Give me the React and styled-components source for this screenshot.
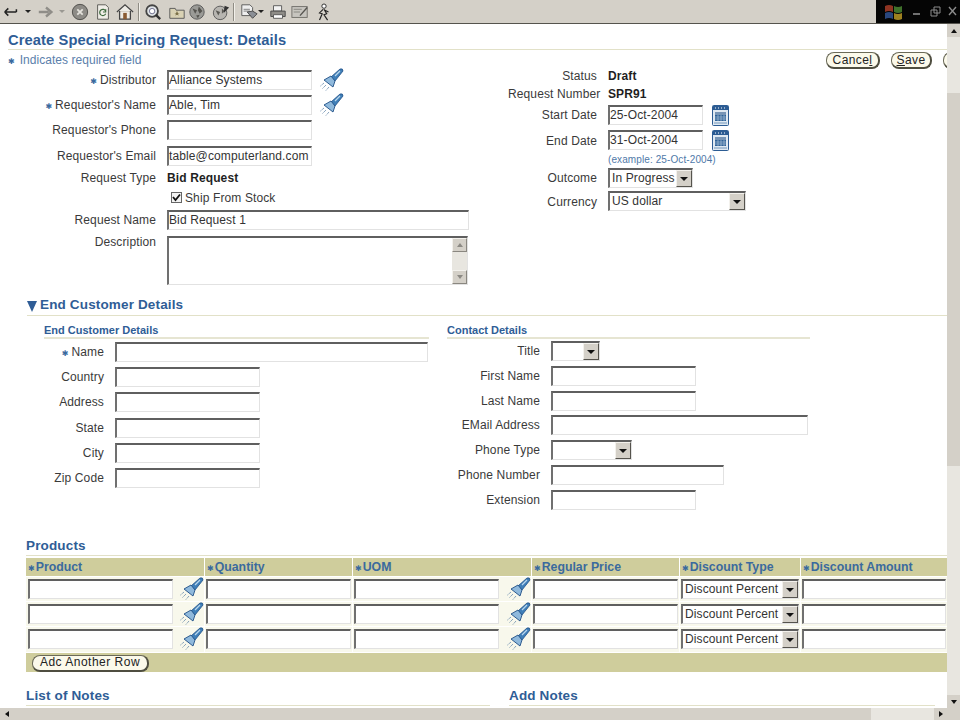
import React from "react";
import styled, { createGlobalStyle } from "styled-components";

const Global = createGlobalStyle`
  html, body { margin: 0; padding: 0; background: #fff; }
  body { width: 960px; height: 720px; overflow: hidden; font-family: "Liberation Sans", Arial, sans-serif; }
  * { box-sizing: border-box; }
`;
const Screen = styled.div`width:960px;height:720px;display:flex;flex-direction:column;overflow:hidden;background:#fff;font-size:12px;color:#3a3a3a;letter-spacing:.12px;`;
const Toolbar = styled.div`height:24px;flex:none;background:#d4d0c8;border-bottom:1px solid #55534d;display:flex;align-items:center;justify-content:space-between;`;
const ToolIcons = styled.div`display:flex;align-items:center;padding-left:2px;`;
const ToolSlot = styled.span`display:flex;align-items:center;justify-content:center;width:18px;height:22px;margin-left:${p=>p.$ml||0}px;`;
const CaretSlot = styled.span`display:flex;align-items:center;justify-content:center;width:8px;height:22px;margin-left:${p=>p.$ml||0}px;&::after{content:"";border:3px solid transparent;border-top:3px solid ${p=>p.$dim?"#9a9892":"#222"};border-bottom:0;}`;
const Divider = styled.span`width:2px;height:18px;background:#8f8c84;border-right:1px solid #f2f0ea;margin-left:${p=>p.$ml}px;`;
const WinBox = styled.div`width:84px;height:23px;background:#050505;display:flex;align-items:center;padding-left:8px;gap:7px;`;
const Middle = styled.div`flex:1;min-height:0;display:flex;`;
const Page = styled.main`width:947px;flex:none;overflow:hidden;padding-top:7px;`;
const Title = styled.h1`margin:0 0 0 8px;font-size:14.7px;line-height:18px;font-weight:700;color:#2f5d96;letter-spacing:.1px;`;
const Rule = styled.div`height:1px;background:#e2e1c8;margin:${p=>p.$m||"0"};`;
const Top = styled.div`display:grid;grid-template-columns:480px 1fr;height:246px;`;
const LeftCol = styled.div`padding-left:8px;`;
const Required = styled.div`color:#5b80ab;height:20px;line-height:20px;letter-spacing:.04px;`;
const Star = styled.span`color:#3a6a9e;font-family:"DejaVu Sans",sans-serif;font-size:${p=>p.$s||8}px;margin-right:${p=>p.$m||3}px;letter-spacing:0;`;
const FormGrid = styled.div`display:grid;grid-template-columns:${p=>p.$label}px auto;column-gap:${p=>p.$gap||10}px;justify-content:start;margin-top:${p=>p.$mt||0}px;`;
const Label = styled.div`height:${p=>p.$h||25}px;line-height:${p=>p.$lh||21}px;text-align:right;white-space:nowrap;`;
const Value = styled.div`height:${p=>p.$h||25}px;display:flex;align-items:flex-start;gap:8px;`;
const Strong = styled.span`font-weight:700;color:#1f1f1f;line-height:${p=>p.$lh||21}px;`;
const Input = styled.div`width:${p=>p.$w}px;height:${p=>p.$h||20}px;background:#fff;border-style:solid;border-width:2px 1px 1px 2px;border-color:#5f5f5f #e2e2e2 #e2e2e2 #707070;padding-left:0;line-height:17px;color:#333;white-space:nowrap;overflow:hidden;flex:none;`;
const Select = styled(Input)`display:flex;justify-content:space-between;padding:0 0 0 2px;`;
const SelectBtn = styled.span`width:16px;flex:none;background:#d4d0c8;border:1px solid;border-color:#f3f1ec #55534d #55534d #f3f1ec;display:flex;align-items:center;justify-content:center;`;
const Caret = styled.span`width:0;height:0;border:4px solid transparent;border-top:4px solid #111;border-bottom:0;`;
const CheckRow = styled.div`height:22px;display:flex;align-items:flex-start;gap:3px;padding:2px 0 0 4px;line-height:17px;`;
const Box = styled.span`width:11px;height:11px;margin-top:2px;border:1px solid #666;background:#f3f3f3;display:flex;align-items:center;justify-content:center;`;
const TextArea = styled(Input)`position:relative;`;
const AreaBar = styled.div`position:absolute;right:0;top:0;bottom:0;width:15px;background:#e8e6e0;display:flex;flex-direction:column;justify-content:space-between;`;
const AreaArrow = styled.span`height:14px;background:#d4d0c8;border:1px solid;border-color:#f3f1ec #8a8780 #8a8780 #f3f1ec;display:flex;align-items:center;justify-content:center;&::after{content:"";border:3px solid transparent;${p=>p.$up?"border-bottom:4px solid #8c8a84;border-top:0;":"border-top:4px solid #8c8a84;border-bottom:0;"}}`;
const Buttons = styled.div`height:17px;margin-top:2px;display:flex;padding-left:346px;gap:11px;white-space:nowrap;`;
const Pill = styled.button`font:12px "Liberation Sans",Arial,sans-serif;letter-spacing:${p=>p.$ls||.4}px;color:#222;height:17px;width:${p=>p.$w}px;flex:none;padding:0;background:#fbf9ea;border:1px solid #6b6a58;border-right:2px solid #4f4e40;border-bottom:2px solid #4f4e40;border-radius:8px;line-height:13px;`;
const Under = styled.span`text-decoration:underline;`;
const RightForm = styled.div`margin-top:-1px;margin-left:28px;`;
const Hint = styled.span`font-size:10px;line-height:9px;color:#4f79a8;letter-spacing:.1px;`;
const Icon = styled.svg`display:block;flex:none;`;
const CalSlot = styled.span`display:block;flex:none;margin-left:1px;`;
const TorchSlot = styled.span`display:block;flex:none;margin-top:-2px;`;
const Section = styled.section`margin-left:${p=>p.$ml||0}px;`;
const SectionHead = styled.h2`margin:0;font-size:13.5px;line-height:17px;font-weight:700;color:#2f5d96;display:flex;align-items:center;gap:3px;letter-spacing:.15px;`;
const Triangle = styled.span`width:0;height:0;border-left:5.5px solid transparent;border-right:5.5px solid transparent;border-top:11px solid #2f5d96;margin-top:3px;`;
const HeadRule = styled(Rule)`margin-top:${p=>p.$mt||1}px;`;
const Split = styled.div`display:grid;grid-template-columns:403px 363px;margin-left:17px;margin-top:7px;height:214px;`;
const SubHead = styled.h3`margin:0;font-size:11px;line-height:14px;font-weight:700;color:#2f5d96;letter-spacing:0;`;
const SubRule = styled.div`height:2px;background:#e6e5d2;width:${p=>p.$w}px;`;
const Table = styled.div`display:grid;grid-template-columns:178px 147px 178px 147px 120px 146px;column-gap:1px;row-gap:1px;margin-top:2px;`;
const Th = styled.div`height:18px;background:#cfcd9c;color:#3b6a9e;font-weight:700;font-size:12.3px;line-height:18px;padding-left:2px;white-space:nowrap;letter-spacing:0;`;
const Td = styled.div`height:24.2px;background:#f8f8ec;padding:2px 0 0 ${p=>p.$pl||1}px;display:flex;justify-content:space-between;`;
const TableFoot = styled.div`grid-column:1/-1;height:19px;background:#cfcd9c;padding:2px 0 0 6px;`;
const Notes = styled.div`display:grid;grid-template-columns:464px 426px;column-gap:19px;margin:15px 0 0 26px;`;
const VBar = styled.div`width:13px;flex:none;background:#e8e6e0;display:flex;flex-direction:column;`;
const VThumb = styled.div`height:373px;background:#d4d0c8;margin-top:56px;`;
const HBar = styled.div`height:12px;flex:none;background:#e8e6e0;display:flex;`;
const HThumb = styled.div`flex:none;width:858px;background:#d4d0c8;`;
const ArrowBtn = styled.span`flex:none;width:13px;height:${p=>p.$h||13}px;background:#d4d0c8;display:flex;align-items:center;justify-content:center;`;
const Fill = styled.div`flex:1;`;
const A = styled.span`width:0;height:0;border:3px solid transparent;${p=>({u:"border-bottom:4px solid #111;border-top:0;",d:"border-top:4px solid #111;border-bottom:0;",l:"border-right:4px solid #111;border-left:0;",r:"border-left:4px solid #111;border-right:0;"}[p.$d])}`;

const Torch = () => (
  <TorchSlot>
    <Icon width="24" height="24" viewBox="0 0 24 24">
      <path d="M11 9 L20 1 Q23 0 23 3 L15 13 Z" fill="#3f7fb8" stroke="#1f4f86" strokeWidth=".8"/>
      <path d="M11 8 L15 13 L13 19 L4 12 Z" fill="#8fb9dc" stroke="#1f4f86" strokeWidth=".9"/>
      <path d="M15 8 L20 3" stroke="#b9d6ec" strokeWidth="1.2"/>
      <path d="M4 15L0.5 18M6 17L2 21M9 19L5.5 23" stroke="#5f84a8" strokeWidth="1" strokeDasharray="1 .8"/>
    </Icon>
  </TorchSlot>
);
const Calendar = () => (
  <CalSlot>
    <Icon width="17" height="21" viewBox="0 0 17 21">
      <rect x=".5" y=".5" width="16" height="20" rx="1" fill="#dfe9f2" stroke="#2c5c93"/>
      <rect x="1" y="1" width="15" height="4" fill="#2c5c93"/>
      <path d="M3 3h1M6 3h1M9 3h1M12 3h1" stroke="#fff"/>
      <rect x="3" y="7" width="11" height="3" fill="#7795b6"/>
      <rect x="3" y="10" width="11" height="6" fill="#2f6398"/>
      <path d="M3 12h11M3 14h11M6 10v6M9 10v6M12 10v6" stroke="#b9cde0" strokeWidth=".6"/>
      <rect x="2" y="17" width="13" height="2" fill="#a9c0d6"/>
    </Icon>
  </CalSlot>
);
const Sel = ({w,children}) => <Select $w={w}><span>{children}</span><SelectBtn><Caret/></SelectBtn></Select>;

const T = ({children,ml}) => <ToolSlot $ml={ml}><Icon width="18" height="18" viewBox="0 0 20 20">{children}</Icon></ToolSlot>;
const Tools = () => (
  <ToolIcons>
    <T><path d="M3 10h13M3 10l4-4M3 10l4 4M16 10V7" stroke="#222" strokeWidth="1.7" fill="none"/></T>
    <CaretSlot $ml={4}/>
    <T ml={5}><path d="M2 10h11M10 5l6 5-6 5" stroke="#8f8d88" strokeWidth="2.6" fill="none"/></T>
    <CaretSlot $ml={3} $dim/>
    <T ml={5}><circle cx="10" cy="10" r="8.5" fill="#8d8b86" stroke="#4b4a46"/><path d="M7 7l6 6M13 7l-6 6" stroke="#e5e3dd" strokeWidth="2"/></T>
    <T ml={5}><path d="M4 2h9l3 3v13H4z" fill="#f0eee8" stroke="#55534f"/><path d="M13 9a3.5 3.5 0 1 0 0 3M13 7v3h-3" stroke="#3e6a3e" strokeWidth="1.3" fill="none"/></T>
    <T ml={4}><path d="M1 10l9-8 9 8M4 9v9h12V9" stroke="#444" strokeWidth="1.4" fill="#eeece6"/><rect x="8" y="11" width="4" height="7" fill="#8a5b33"/></T>
    <Divider $ml={4}/>
    <T ml={4}><circle cx="9" cy="9" r="6.5" fill="#dfe3e6" stroke="#444" strokeWidth="2"/><circle cx="9" cy="9" r="3" fill="#fff" stroke="#668"/><path d="M13 13l5 5" stroke="#333" strokeWidth="2.6"/></T>
    <T ml={6}><path d="M2 6h6l1 2h9v9H2z" fill="#d9d2b4" stroke="#555"/><path d="M10 9l1 2h2l-2 1 1 2-2-1-2 1 1-2-2-1h2z" fill="#7a6f45"/></T>
    <T ml={2}><circle cx="10" cy="10" r="8" fill="#9a9a96" stroke="#555"/><path d="M5 6l5 2-2 4zM12 4l4 5-3 3-2-4zM9 14l4-1-2 4z" fill="#55544f"/></T>
    <T ml={6}><circle cx="9" cy="11" r="7.5" fill="#b7b5b0" stroke="#555"/><path d="M4 8l5 2-2 4zM11 6l3 3-3 3z" fill="#5a5954"/><path d="M14 3l5 2-6 6z" fill="#333"/></T>
    <Divider $ml={3}/>
    <T ml={5}><path d="M2 2h9l3 3v9H2z" fill="#eee" stroke="#555"/><path d="M4 7h7M4 9h7" stroke="#777"/><path d="M8 10l6 7 5-5-5-3z" fill="#8b8f96" stroke="#444"/></T>
    <CaretSlot $ml={-1}/>
    <T ml={4}><path d="M5 3h9v6H5z" fill="#f2f2f2" stroke="#555"/><path d="M2 9h16v6H2z" fill="#8f8d88" stroke="#444"/><path d="M5 13h10v4H5z" fill="#fff" stroke="#555"/></T>
    <T ml={4}><rect x="1" y="4" width="17" height="12" fill="#c7c5bf" stroke="#6d6b66"/><path d="M3 7h9M3 10h7" stroke="#85837e"/><path d="M10 14l8-9" stroke="#55534f" strokeWidth="1.5"/></T>
    <T ml={6}><circle cx="10" cy="3.5" r="2.4" fill="#fff" stroke="#222"/><path d="M9 7l-4 4 3 1-3 7M10 7l3 5-3 1 4 6M11 8l4 2" stroke="#222" strokeWidth="1.3" fill="none"/></T>
  </ToolIcons>
);

const Row = ({label,req,h,lh,children}) => (<>
  <Label $h={h} $lh={lh}>{req && <Star>✱</Star>}{label}</Label>
  <Value $h={h}>{children}</Value>
</>);

const Thd = ({children}) => <Th><Star $s={8} $m={1}>✱</Star>{children}</Th>;
const ProductRow = () => (<>
  <Td $pl={2}><Input $w={145}/><Torch/></Td>
  <Td><Input $w={145}/></Td>
  <Td><Input $w={145}/><Torch/></Td>
  <Td><Input $w={145}/></Td>
  <Td><Sel w={118}>Discount Percent</Sel></Td>
  <Td><Input $w={144}/></Td>
</>);

export default function App(){
  return (
    <Screen>
      <Global/>
      <Toolbar>
        <Tools/>
        <WinBox>
          <Icon width="20" height="18" viewBox="0 0 20 18" opacity=".7">
            <path d="M1 3q4-2 8 0v6q-4-2-8 0z" fill="#c8492f"/><path d="M10 3q4 2 8 0v6q-4 2-8 0z" fill="#5aa03c"/>
            <path d="M1 10q4-2 8 0v6q-4-2-8 0z" fill="#3b64b0"/><path d="M10 10q4 2 8 0v6q-4 2-8 0z" fill="#e0b62c"/>
          </Icon>
          <Icon width="48" height="14" viewBox="0 0 48 14">
            <path d="M2 9h7" stroke="#8c8c8c" strokeWidth="1.6"/>
            <path d="M23 2h6v6h-6zM20 5h6v6h-6z" fill="#050505" stroke="#8c8c8c"/>
            <path d="M38 2l7 8M45 2l-7 8" stroke="#8c8c8c" strokeWidth="1.4"/>
          </Icon>
        </WinBox>
      </Toolbar>
      <Middle>
        <Page>
          <Title>Create Special Pricing Request: Details</Title>
          <Rule $m="0 0 0 8px"/>
          <Top>
            <LeftCol>
              <Required><Star $m={5}>✱</Star>Indicates required field</Required>
              <FormGrid $label={148} $gap={11}>
                <Row label="Distributor" req><Input $w={145}>Alliance Systems</Input><Torch/></Row>
                <Row label="Requestor's Name" req><Input $w={145}>Able, Tim</Input><Torch/></Row>
                <Row label="Requestor's Phone" h={26}><Input $w={145}/></Row>
                <Row label="Requestor's Email" h={22}><Input $w={145}>table@computerland.com</Input></Row>
                <Row label="Request Type" h={20} lh={20}><Strong $lh={20}>Bid Request</Strong></Row>
                <Label $h={22}/><CheckRow><Box><Icon width="9" height="9" viewBox="0 0 9 9"><path d="M1 4l2.5 3L8 1.5" stroke="#111" strokeWidth="1.8" fill="none"/></Icon></Box>Ship From Stock</CheckRow>
                <Row label="Request Name" h={26}><Input $w={302}>Bid Request 1</Input></Row>
                <Row label="Description" h={50} lh={13}><TextArea $w={301} $h={49}><AreaBar><AreaArrow $up/><AreaArrow/></AreaBar></TextArea></Row>
              </FormGrid>
            </LeftCol>
            <div>
              <Buttons>
                <Pill $w={54}>Cance<Under>l</Under></Pill>
                <Pill $w={41}><Under>S</Under>ave</Pill>
                <Pill $w={55}/>
              </Buttons>
              <RightForm>
                <FormGrid $label={89} $gap={11}>
                  <Row label="Status" h={18} lh={17}><Strong $lh={17}>Draft</Strong></Row>
                  <Row label="Request Number" h={19} lh={17}><Strong $lh={17}>SPR91</Strong></Row>
                  <Row label="Start Date"><Input $w={95}>25-Oct-2004</Input><Calendar/></Row>
                  <Row label="End Date" lh={22}><Input $w={95}>31-Oct-2004</Input><Calendar/></Row>
                  <Label $h={13}/><Value $h={13}><Hint>(example: 25-Oct-2004)</Hint></Value>
                  <Row label="Outcome" h={23} lh={20}><Sel w={85}>In Progress</Sel></Row>
                  <Row label="Currency" h={20} lh={22}><Sel w={138}>US dollar</Sel></Row>
                </FormGrid>
              </RightForm>
            </div>
          </Top>
          <Section $ml={27}>
            <SectionHead><Triangle/>End Customer Details</SectionHead>
            <HeadRule $mt={2}/>
            <Split>
              <div>
                <SubHead>End Customer Details</SubHead>
                <SubRule $w={385}/>
                <FormGrid $label={60} $gap={11} $mt={3}>
                  <Row label="Name" req h={25.2} lh={21}><Input $w={313}/></Row>
                  <Row label="Country" h={25.2} lh={21}><Input $w={145}/></Row>
                  <Row label="Address" h={25.2} lh={21}><Input $w={145}/></Row>
                  <Row label="State" h={25.2} lh={21}><Input $w={145}/></Row>
                  <Row label="City" h={25.2} lh={21}><Input $w={145}/></Row>
                  <Row label="Zip Code" h={25.2} lh={21}><Input $w={145}/></Row>
                </FormGrid>
              </div>
              <div>
                <SubHead>Contact Details</SubHead>
                <SubRule $w={363}/>
                <FormGrid $label={93} $gap={11} $mt={2}>
                  <Row label="Title" h={24.8} lh={20}><Sel w={49}/></Row>
                  <Row label="First Name" h={24.8} lh={20}><Input $w={145}/></Row>
                  <Row label="Last Name" h={24.8} lh={20}><Input $w={145}/></Row>
                  <Row label="EMail Address" h={24.8} lh={21}><Input $w={257}/></Row>
                  <Row label="Phone Type" h={24.8} lh={21}><Sel w={81}/></Row>
                  <Row label="Phone Number" h={24.8} lh={21}><Input $w={173}/></Row>
                  <Row label="Extension" h={24.8} lh={21}><Input $w={145}/></Row>
                </FormGrid>
              </div>
            </Split>
          </Section>
          <Section $ml={26}>
            <SectionHead>Products</SectionHead>
            <HeadRule/>
            <Table>
              <Thd>Product</Thd><Thd>Quantity</Thd><Thd>UOM</Thd><Thd>Regular Price</Thd><Thd>Discount Type</Thd><Thd>Discount Amount</Thd>
              <ProductRow/><ProductRow/><ProductRow/>
              <TableFoot><Pill $w={117} $ls={.5}>Adc Another Row</Pill></TableFoot>
            </Table>
          </Section>
          <Notes>
            <div><SectionHead>List of Notes</SectionHead><HeadRule/></div>
            <div><SectionHead>Add Notes</SectionHead><HeadRule/></div>
          </Notes>
        </Page>
        <VBar>
          <ArrowBtn><A $d="u"/></ArrowBtn>
          <VThumb/>
          <Fill/>
          <ArrowBtn><A $d="d"/></ArrowBtn>
        </VBar>
      </Middle>
      <HBar><ArrowBtn $h={12}><A $d="l"/></ArrowBtn><HThumb/><Fill/><ArrowBtn $h={12}><A $d="r"/></ArrowBtn><ArrowBtn $h={12}/></HBar>
    </Screen>
  );
}
